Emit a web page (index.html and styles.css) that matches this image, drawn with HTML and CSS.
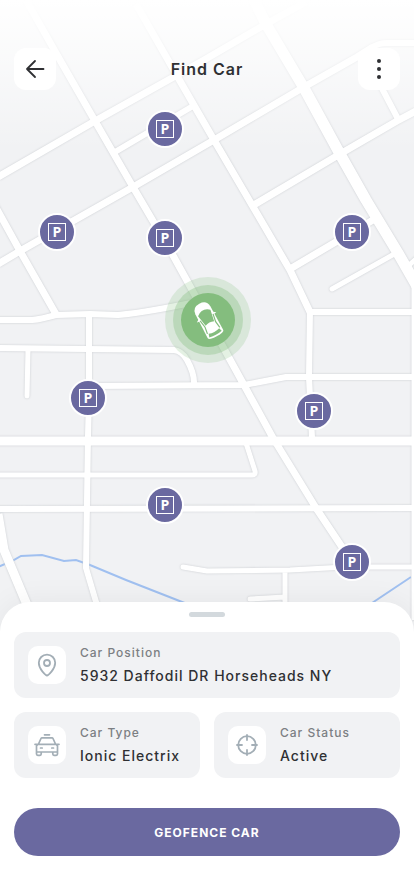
FILE: index.html
```html
<!DOCTYPE html>
<html lang="en">
<head>
  <meta charset="UTF-8">
  <meta name="viewport" content="width=device-width, initial-scale=1">
  <title>Find Car</title>
  <link rel="stylesheet" href="styles.css">
</head>
<body>
  <main class="map">
    <svg class="map-roads" viewBox="0 0 414 640" preserveAspectRatio="xMidYMin slice" aria-hidden="true">
      <defs>
        <g id="roads" fill="none" stroke-linejoin="round">
          <g class="lane" stroke-linecap="round">
            <path d="M332 289L396 253M407 267L416 259M28 350L27 396M183 567L207 571L290 570L345 567H411M285 571V612M250 599L285 597"/>
            <path d="M-5 475H252Q256 475 255 471L246 443"/>
          </g>
          <g class="street">
            <path d="M115 152L193 106M376 77L398 119M310 312H416M310 310L309 377L312 438M-2 509L416 508"/>
            <path d="M89 315L89 398L88 436L86 568L99 612M371 48Q378 43 387 43H416"/>
            <path d="M-2 320H32Q42 319 56 315L90 314L118 315Q150 312 205 300"/>
            <path d="M-2 348L174 350Q182 351 187 360Q195 374 194 386M89 386L244 385L286 377H416"/>
          </g>
          <g class="road-main">
            <path d="M136 4L180 81L214 140L252 205L290 270L310 312M252 206L340 154L397 121L416 111M290 269L373 220"/>
            <path d="M-6 204L20 251L57 316"/>
            <path d="M26 0L60 60L95 121L133 187L170 250L196 297L222 345L244 385L273 438L316 508L352 562"/>
            <path d="M-2 177L95 121L204 60L266 24L306 2M-2 264L20 251L133 187L214 140L304 87L357 57L373 47"/>
            <path d="M415 282V620"/>
          </g>
          <g class="avenue">
            <path d="M-2 441H416M-2 514L4 550L30 612"/>
          </g>
          <g class="highway">
            <path d="M252 -4L266 24L304 88L340 154L366 200L398 253L418 288"/>
          </g>
        </g>
        <linearGradient id="fade" x1="0" y1="0" x2="0" y2="1">
          <stop offset="0" stop-color="#fff"/>
          <stop offset="0.12" stop-color="#fff" stop-opacity="0.9"/>
          <stop offset="1" stop-color="#fff" stop-opacity="0"/>
        </linearGradient>
      </defs>
      <path d="M-2 567L12 561L21 556L42 555L64 561L76 560L90 565L126 580L200 609M411 577L366 607" fill="none" stroke="#a0c0f0" stroke-width="2"/>
      <use href="#roads" class="road-edge"/>
      <use href="#roads" class="road"/>
      <rect width="414" height="150" fill="url(#fade)"/>
    </svg>

    <header class="topbar">
      <button class="icon-btn" aria-label="Back">
        <svg width="20" height="20" viewBox="0 0 20 20" fill="none" stroke="#2f3033" stroke-width="1.8" stroke-linecap="round" stroke-linejoin="round">
          <path d="M18.500 10H2M10 2L2 10L10 18"/>
        </svg>
      </button>
      <h1>Find Car</h1>
      <button class="icon-btn" aria-label="More options">
        <svg width="20" height="20" viewBox="0 0 20 20" fill="#2f3033">
          <circle cx="10" cy="2" r="2"/><circle cx="10" cy="10" r="2"/><circle cx="10" cy="18" r="2"/>
        </svg>
      </button>
    </header>

    <button class="pin pin-1" aria-label="Parking 1"><span>P</span></button>
    <button class="pin pin-2" aria-label="Parking 2"><span>P</span></button>
    <button class="pin pin-3" aria-label="Parking 3"><span>P</span></button>
    <button class="pin pin-4" aria-label="Parking 4"><span>P</span></button>
    <button class="pin pin-5" aria-label="Parking 5"><span>P</span></button>
    <button class="pin pin-6" aria-label="Parking 6"><span>P</span></button>
    <button class="pin pin-7" aria-label="Parking 7"><span>P</span></button>
    <button class="pin pin-8" aria-label="Parking 8"><span>P</span></button>

    <div class="my-car">
      <svg width="40" height="44" viewBox="-20 -22 40 44">
        <g transform="rotate(-28)">
          <path fill="#fff" d="M-8.500 -11Q-8 -18.500 0 -18.500Q8 -18.500 8.500 -11L8.800 16Q8.500 18.500 0 18.500Q-8.500 18.500 -8.800 16Z"/>
          <path fill="#fff" d="M-8 -5L-11 -3L-8 -2.500ZM8 -5L11 -3L8 -2.500Z"/>
          <path fill="#84bd7e" d="M-7 -8Q0 -14 7 -8L4.800 4Q0 2 -4.800 4Z"/>
          <path fill="none" stroke="#84bd7e" stroke-width="1.2" d="M-7.300 -3L-6 5L-7 12M7.300 -3L6 5L7 12"/>
          <path fill="#84bd7e" d="M-6 12.500Q0 14.500 6 12.500L7 16Q0 17.800 -7 16Z"/>
        </g>
      </svg>
    </div>
  </main>

  <section class="sheet">
    <div class="handle"></div>
    <div class="cards">
      <div class="card card-wide">
        <div class="card-icon">
          <svg width="26" height="26" viewBox="0 0 26 26" fill="none" stroke="#a3aeb6" stroke-width="1.8" stroke-linejoin="round">
            <path d="M13 23.500C12 23.500 4.800 17.500 4.800 10.800A8.200 8.200 0 0 1 21.200 10.800C21.200 17.500 14 23.500 13 23.500Z"/>
            <circle cx="13" cy="11" r="3"/>
          </svg>
        </div>
        <div>
          <p class="label">Car Position</p>
          <p class="value">5932 Daffodil DR Horseheads NY</p>
        </div>
      </div>
      <div class="card">
        <div class="card-icon">
          <svg width="26" height="26" viewBox="0 0 26 26" fill="none" stroke="#a3aeb6" stroke-width="1.7" stroke-linecap="round" stroke-linejoin="round">
            <path d="M10.500 2.800H15.500M4.500 12L7 6.500Q7.300 5.800 8 5.800H18Q18.700 5.800 19 6.500L21.500 12M1 12.300H25M3.800 12.300L2.500 14V22Q2.500 23.300 3.800 23.300H6Q7.200 23.300 7.200 22V20H18.800V22Q18.800 23.300 20 23.300H22.200Q23.500 23.300 23.500 22V14L22.200 12.300M2.500 20H23.500M6.500 16H8.200M17.800 16H19.500"/>
          </svg>
        </div>
        <div>
          <p class="label">Car Type</p>
          <p class="value">Ionic Electrix</p>
        </div>
      </div>
      <div class="card">
        <div class="card-icon">
          <svg width="26" height="26" viewBox="0 0 26 26" fill="none" stroke="#a3aeb6" stroke-width="1.8" stroke-linecap="round">
            <circle cx="13" cy="13" r="8.800"/>
            <path d="M13 3V8M13 18V23M3 13H8M18 13H23"/>
          </svg>
        </div>
        <div>
          <p class="label">Car Status</p>
          <p class="value">Active</p>
        </div>
      </div>
    </div>
    <button class="geofence">GEOFENCE CAR</button>
  </section>
</body>
</html>
```
FILE: styles.css
```css
* {
  box-sizing: border-box;
}
body {
  margin: 0;
  min-height: 100vh;
  display: flex;
  flex-direction: column;
  font-family: Inter, "Liberation Sans", sans-serif;
  color: #2f3033;
  background: #fff;
}
button {
  border: none;
  padding: 0;
  font-family: inherit;
  cursor: pointer;
}
h1, p {
  margin: 0;
}

/* map */
.map {
  position: relative;
  flex: 1;
  min-height: 620px;
  overflow: hidden;
  background: #f1f2f4;
}
.map-roads {
  position: absolute;
  inset: 0;
  width: 100%;
  height: 100%;
}
.road {
  stroke: #fff;
}
.road-edge {
  stroke: #dcdee1;
  filter: drop-shadow(0 0 1px #c9ccd0);
}
.lane { stroke-width: 5px; }
.street { stroke-width: 6px; }
.road-main { stroke-width: 7px; }
.avenue { stroke-width: 9px; }
.highway { stroke-width: 11px; }

.topbar {
  position: relative;
  display: flex;
  align-items: center;
  justify-content: space-between;
  padding: 48px 14px 0;
}
.topbar h1 {
  font-size: 16px;
  font-weight: 600;
  letter-spacing: 1px;
}
.icon-btn {
  display: flex;
  align-items: center;
  justify-content: center;
  width: 42px;
  height: 42px;
  border-radius: 12px;
  background: #fff;
}

/* parking pins */
.pin {
  position: absolute;
  display: flex;
  align-items: center;
  justify-content: center;
  width: 38px;
  height: 38px;
  margin: -19px 0 0 -19px;
  border: 2px solid #fff;
  border-radius: 50%;
  background: #6a69a0;
  color: #fff;
}
.pin span {
  width: 18px;
  height: 18px;
  border: 1px solid #fff;
  font: bold 14px/16px "Open Sans", sans-serif;
  text-align: center;
}
.pin-1 { left: calc(50% - 42px); top: 129px; }
.pin-2 { left: calc(50% - 150px); top: 232px; }
.pin-3 { left: calc(50% - 42px); top: 238px; }
.pin-4 { left: calc(50% + 145px); top: 232px; }
.pin-5 { left: calc(50% - 119px); top: 398px; }
.pin-6 { left: calc(50% + 107px); top: 411px; }
.pin-7 { left: calc(50% - 42px); top: 505px; }
.pin-8 { left: calc(50% + 145px); top: 562px; }

.my-car {
  position: absolute;
  left: calc(50% + 1px);
  top: 320px;
  display: flex;
  align-items: center;
  justify-content: center;
  width: 54px;
  height: 54px;
  margin: -27px 0 0 -27px;
  border-radius: 50%;
  background: #84bd7e;
  box-shadow: 0 0 0 8px rgba(132, 189, 126, 0.35), 0 0 0 16px rgba(132, 189, 126, 0.22);
}

/* bottom sheet */
.sheet {
  position: relative;
  margin-top: -30px;
  padding: 10px 14px 40px;
  border-radius: 30px 30px 0 0;
  background: #fff;
  box-shadow: 0 0 30px rgba(0, 0, 0, 0.06);
}
.handle {
  width: 36px;
  height: 5px;
  margin: 0 auto 15px;
  border-radius: 3px;
  background: #d3d9dd;
}
.cards {
  display: grid;
  grid-template-columns: 1fr 1fr;
  gap: 14px;
}
.card {
  display: flex;
  align-items: center;
  gap: 14px;
  min-height: 66px;
  padding: 10px 14px;
  border-radius: 12px;
  background: #f1f2f4;
}
.card-wide {
  grid-column: 1 / -1;
}
.card-icon {
  display: flex;
  flex: none;
  align-items: center;
  justify-content: center;
  width: 38px;
  height: 38px;
  border-radius: 10px;
  background: #fff;
}
.label {
  margin-bottom: 4px;
  font-size: 12px;
  font-weight: 500;
  line-height: 20px;
  letter-spacing: 1px;
  color: #7c7f83;
}
.value {
  font-size: 14px;
  font-weight: 500;
  line-height: 18px;
  padding-bottom: 2px;
  letter-spacing: 1px;
}
.geofence {
  display: block;
  width: 100%;
  height: 48px;
  margin-top: 30px;
  border-radius: 24px;
  background: #6a69a0;
  color: #fff;
  font-size: 12px;
  font-weight: 700;
  letter-spacing: 1px;
}
```
